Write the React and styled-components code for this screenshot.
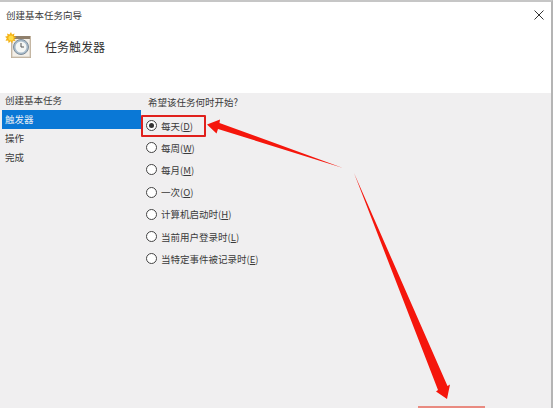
import React from "react";
import styled, { createGlobalStyle } from "styled-components";

const options = [
  { label: "每天", key: "D", checked: true, marked: true },
  { label: "每周", key: "W" },
  { label: "每月", key: "M" },
  { label: "一次", key: "O" },
  { label: "计算机启动时", key: "H" },
  { label: "当前用户登录时", key: "L" },
  { label: "当特定事件被记录时", key: "E" },
];

const steps = ["创建基本任务", "触发器", "操作", "完成"];

function TaskIcon() {
  return (
    <svg width="26" height="26" viewBox="0 0 26 26">
      <rect x="6" y="4" width="20" height="22" fill="#b9a78f" />
      <rect x="7" y="5" width="18" height="20" fill="#f3efe8" stroke="#cfc6b8" />
      <rect x="7" y="4" width="18" height="3" fill="#8f7f6b" />
      <circle cx="16" cy="15" r="7.5" fill="#a9bccb" stroke="#7d8c99" />
      <circle cx="16" cy="15" r="5.5" fill="#f4f6f4" />
      <path d="M16 11v4h3" fill="none" stroke="#555" strokeWidth="1" />
      <path d="M6 0l1 2.5 2.5-1-.6 2.7 2.600.8-2.300 1.500 1.300 2.400-2.700-.2-.4 2.700L5.500 9.300 3.600 11.200l-.4-2.700-2.700.2 1.300-2.400L0 4.800l2.600-.8L2 1.500l2.500 1z" fill="#f5b316" />
      <circle cx="6" cy="6" r="2.600" fill="#ffdc45" />
    </svg>
  );
}

function CloseIcon() {
  return (
    <svg width="10" height="10" viewBox="0 0 10 10">
      <path d="M.5.500l9 9M9.500.500l-9 9" stroke="#333" strokeWidth="1" />
    </svg>
  );
}

export default function App() {
  return (
    <Page>
      <GlobalStyle />
      <Wizard>
        <Header>
          <TitleBar>
            <span>创建基本任务向导</span>
            <CloseIcon />
          </TitleBar>
          <Banner>
            <TaskIcon />
            <BannerTitle>任务触发器</BannerTitle>
          </Banner>
        </Header>
        <Body>
          <Sidebar>
            {steps.map((step, i) => (
              <Step key={step} $active={i === 1}>{step}</Step>
            ))}
          </Sidebar>
          <Content>
            <Question>希望该任务何时开始?</Question>
            {options.map((o) => (
              <Option key={o.key} $marked={o.marked}>
                <Radio $checked={o.checked} />
                <span>{o.label}(<u>{o.key}</u>)</span>
              </Option>
            ))}
          </Content>
        </Body>
      </Wizard>
      <Annotations width="554" height="408" viewBox="0 0 554 408">
        <polygon points="207,124.500 220,119.500 219.500,123 343,168 218,129 216.500,133.500" fill="#f5160c" />
        <polygon points="354,173 447.500,386 450,384.500 447,399 436,391.500 438,390" fill="#f5160c" />
      </Annotations>
      <NextHint />
    </Page>
  );
}

const GlobalStyle = createGlobalStyle`
  html, body {
    margin: 0;
    padding: 0;
  }
  body {
    font-family: "Noto Sans CJK SC", "Liberation Sans", sans-serif;
    color: #3a3a3a;
  }
`;

const Page = styled.div`
  position: relative;
  width: 554px;
  height: 408px;
  overflow: hidden;
  background: #fff;
`;

const Wizard = styled.div`
  width: 551px;
  height: 406px;
  display: flex;
  flex-direction: column;
  border-top: 2px solid #c6c6c6;
  border-right: 2px solid #b4b4b4;
`;

const Header = styled.div`
  height: 91px;
  flex: none;
  background: #fff;
`;

const TitleBar = styled.div`
  height: 26px;
  display: flex;
  align-items: center;
  justify-content: space-between;
  padding: 0 7px 0 6px;
  font-size: 9.500px;
  box-sizing: border-box;
`;

const Banner = styled.div`
  display: flex;
  align-items: flex-start;
  gap: 15px;
  padding: 4px 0 0 5px;
`;

const BannerTitle = styled.div`
  font-size: 12px;
  line-height: 29px;
  margin-left: -1px;
  color: #333;
`;

const Body = styled.div`
  flex: 1;
  display: flex;
  background: #f0eff0;
`;

const Sidebar = styled.div`
  width: 141px;
  flex: none;
  margin-top: -2px;
  padding-left: 2px;
  box-sizing: border-box;
`;

const Step = styled.div`
  height: 19px;
  padding-left: 3px;
  font-size: 9.500px;
  line-height: 19px;
  background: ${(p) => (p.$active ? "#0a78d6" : "transparent")};
  color: ${(p) => (p.$active ? "#e8eef4" : "#3a3a3a")};
`;

const Content = styled.div`
  flex: 1;
  display: flex;
  flex-direction: column;
  padding-left: 5px;
`;

const Question = styled.div`
  height: 21.500px;
  font-size: 9.500px;
  line-height: 19.500px;
  padding-left: 2px;
`;

const Option = styled.div`
  position: relative;
  height: 22.200px;
  display: flex;
  align-items: center;
  gap: 4px;
  font-size: 9.500px;
  ${(p) =>
    p.$marked &&
    `
    &::after {
      content: "";
      position: absolute;
      left: -5px;
      top: 0;
      width: 61px;
      height: 18px;
      border: 2px solid #e0201c;
      border-radius: 1px;
    }
  `}
`;

const Radio = styled.span`
  width: 11px;
  height: 11px;
  box-sizing: border-box;
  flex: none;
  border: 1px solid #444;
  border-radius: 50%;
  background: #fff;
  display: flex;
  align-items: center;
  justify-content: center;
  &::before {
    content: "";
    width: 5px;
    height: 5px;
    border-radius: 50%;
    background: ${(p) => (p.$checked ? "#333" : "transparent")};
  }
`;

const Annotations = styled.svg`
  position: absolute;
  left: 0;
  top: 0;
  pointer-events: none;
`;

const NextHint = styled.div`
  position: absolute;
  left: 418px;
  top: 406px;
  width: 67px;
  height: 2px;
  background: #e98a80;
`;
